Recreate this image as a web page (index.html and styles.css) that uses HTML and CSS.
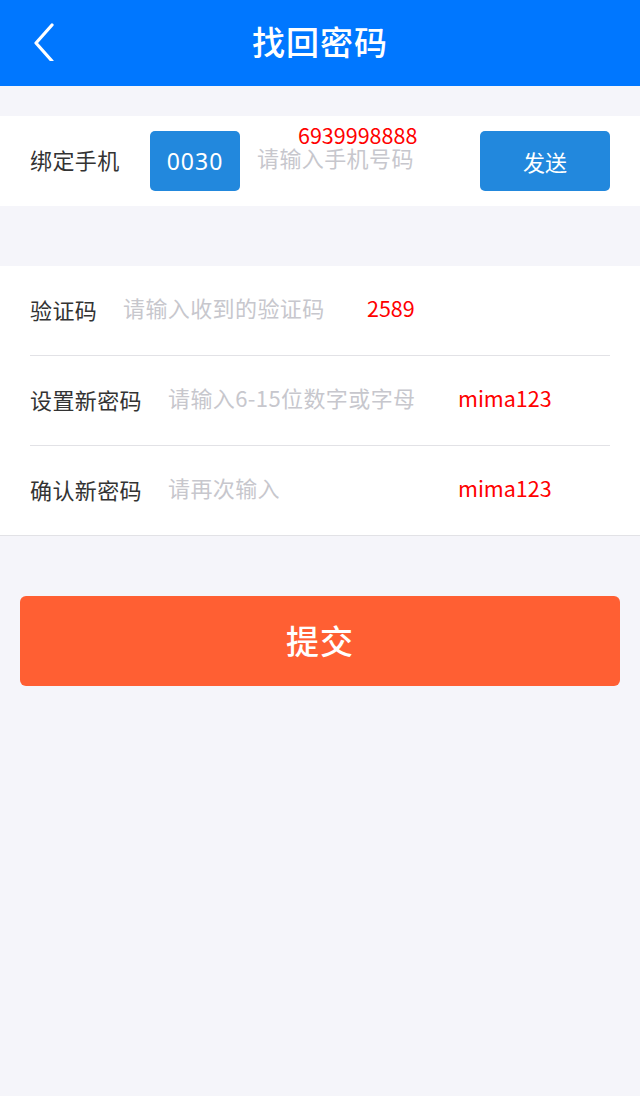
FILE: index.html
```html
<!DOCTYPE html>
<html lang="zh-CN">
<head>
<meta charset="utf-8">
<title>找回密码</title>
<link rel="stylesheet" href="styles.css">
</head>
<body>
<header class="topbar">
  <span class="back">
    <svg width="24" height="40" viewBox="0 0 24 40"><polyline points="19,4 3,22 19,40" fill="none" stroke="#fff" stroke-width="3.2" stroke-linecap="round" stroke-linejoin="round"/></svg>
  </span>
  <h1 class="title">找回密码</h1>
</header>

<section class="card phone-card">
  <span class="label">绑定手机</span>
  <span class="code">0030</span>
  <span class="ph ph-phone">请输入手机号码</span>
  <button class="send">发送</button>
  <span class="note note-phone">6939998888</span>
</section>

<section class="card form-card">
  <div class="row">
    <span class="label l-short">验证码</span>
    <span class="ph ph-code">请输入收到的验证码</span>
    <span class="note">2589</span>
  </div>
  <div class="row">
    <span class="label l-long">设置新密码</span>
    <span class="ph ph-pwd">请输入6-15位数字或字母</span>
    <span class="note">mima123</span>
  </div>
  <div class="row">
    <span class="label l-long">确认新密码</span>
    <span class="ph ph-pwd">请再次输入</span>
    <span class="note">mima123</span>
  </div>
</section>

<div class="submit-wrap">
  <button class="submit">提交</button>
</div>
</body>
</html>
```

FILE: styles.css
```css
* { box-sizing: border-box; }
html, body { margin: 0; padding: 0; }
body {
  background: #f5f5fa;
  font-family: "Noto Sans CJK SC", "Noto Sans", sans-serif;
  width: 640px;
  min-height: 1096px;
}
.topbar {
  height: 86px;
  background: #0077ff;
  display: flex;
  align-items: center;
  justify-content: center;
  position: relative;
}
.back {
  position: absolute;
  left: 33px;
  top: 21px;
  width: 24px;
  height: 42px;
}
.title {
  margin: 0 0 4px;
  color: #fff;
  font-size: 33px;
  font-weight: 500;
  letter-spacing: 1px;
  line-height: 1;
}
.card { background: #fff; }
.phone-card {
  margin-top: 30px;
  height: 90px;
  display: flex;
  align-items: center;
  padding: 0 30px;
  position: relative;
}
.label {
  color: #333;
  font-size: 22px;
  letter-spacing: 0.4px;
  flex: none;
}
.phone-card .label { width: 120px; margin-top: -4px; }
.code {
  flex: none;
  width: 90px;
  height: 60px;
  background: #2288dd;
  border-radius: 5px;
  color: #fff;
  font-family: "Noto Sans", sans-serif;
  font-size: 23px;
  letter-spacing: 1px;
  display: flex;
  align-items: center;
  justify-content: center;
}
.ph {
  color: #c7c7cd;
  font-size: 22px;
  letter-spacing: 0.4px;
  flex: none;
}
.ph-phone { margin-left: 17px; margin-top: -9px; }
.send {
  margin-left: auto;
  width: 130px;
  height: 60px;
  border: none;
  border-radius: 5px;
  background: #2288dd;
  color: #fff;
  font-family: "Noto Sans CJK SC", sans-serif;
  font-size: 22px;
  padding: 0;
}
.note {
  color: #ff0000;
  font-size: 21.5px;
  flex: none;
}
.note-phone {
  position: absolute;
  left: 298px;
  top: 3px;
}
.form-card {
  margin-top: 60px;
  padding: 0 30px;
  border-bottom: 1px solid #e2e2e6;
}
.row {
  height: 90px;
  display: flex;
  align-items: center;
  border-bottom: 1px solid #e2e2e6;
}
.row:last-child { height: 89px; border-bottom: none; }
.row .label { margin-top: -4px; }
.row .ph { margin-top: -7px; }
.row .note { margin-top: -6px; }
.l-short { width: 93px; }
.l-long { width: 138px; }
.ph-code { width: 244px; }
.ph-pwd { width: 290px; }
.submit-wrap { padding: 60px 20px 0; }
.submit {
  width: 100%;
  height: 90px;
  border: none;
  border-radius: 6px;
  background: #ff5f33;
  color: #fff;
  font-family: "Noto Sans CJK SC", sans-serif;
  font-size: 33px;
  font-weight: 500;
  letter-spacing: 1px;
  padding: 0 0 2px;
}
```
